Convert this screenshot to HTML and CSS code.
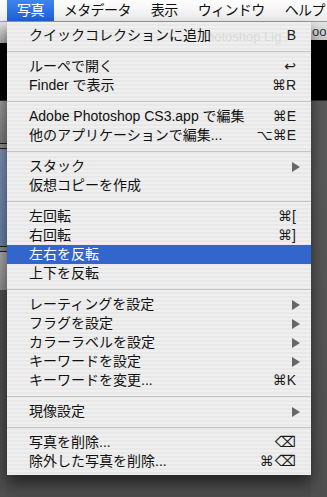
FILE: index.html
```html
<!DOCTYPE html>
<html lang="ja">
<head>
    <meta charset="UTF-8">
    <title>写真メニュー</title>
    <link rel="stylesheet" href="styles.css">
</head>
<body>
<div class="menubar">
    <span class="mb-item active">写真</span>
    <span class="mb-item">メタデータ</span>
    <span class="mb-item">表示</span>
    <span class="mb-item">ウィンドウ</span>
    <span class="mb-item">ヘルプ</span>
</div>

<div class="desk">
    <div class="strip left">
        <div class="b-title"></div>
        <div class="b-black l"></div>
        <div class="b-gray"></div>
        <div class="b-rule"></div>
        <div class="b-blue"></div>
        <div class="b-rule"></div>
        <div class="b-light"></div>
    </div>
    <div class="strip mid"></div>
    <div class="strip right">
        <div class="b-title"><span class="wintitle">oo</span></div>
        <div class="b-black"></div>
    </div>

    <div class="menu">
        <span class="ghost">hotoshop Lig</span>
        <div class="row"><span class="label">クイックコレクションに追加</span><span class="key">B</span></div>
        <div class="sep"></div>
        <div class="row"><span class="label">ルーペで開く</span><span class="key">↩</span></div>
        <div class="row"><span class="label">Finder で表示</span><span class="key">⌘R</span></div>
        <div class="sep"></div>
        <div class="row"><span class="label">Adobe Photoshop CS3.app で編集</span><span class="key">⌘E</span></div>
        <div class="row"><span class="label">他のアプリケーションで編集...</span><span class="key">⌥⌘E</span></div>
        <div class="sep"></div>
        <div class="row"><span class="label">スタック</span><span class="arrow"></span></div>
        <div class="row"><span class="label">仮想コピーを作成</span></div>
        <div class="sep"></div>
        <div class="row"><span class="label">左回転</span><span class="key">⌘[</span></div>
        <div class="row"><span class="label">右回転</span><span class="key">⌘]</span></div>
        <div class="row selected"><span class="label">左右を反転</span></div>
        <div class="row"><span class="label">上下を反転</span></div>
        <div class="sep"></div>
        <div class="row"><span class="label">レーティングを設定</span><span class="arrow"></span></div>
        <div class="row"><span class="label">フラグを設定</span><span class="arrow"></span></div>
        <div class="row"><span class="label">カラーラベルを設定</span><span class="arrow"></span></div>
        <div class="row"><span class="label">キーワードを設定</span><span class="arrow"></span></div>
        <div class="row"><span class="label">キーワードを変更...</span><span class="key">⌘K</span></div>
        <div class="sep"></div>
        <div class="row"><span class="label">現像設定</span><span class="arrow"></span></div>
        <div class="sep"></div>
        <div class="row"><span class="label">写真を削除...</span><span class="key"><span class="del">⌫</span></span></div>
        <div class="row"><span class="label">除外した写真を削除...</span><span class="key">⌘<span class="del">⌫</span></span></div>
    </div>
</div>
</body>
</html>
```

FILE: styles.css
```css
body { margin: 0; width: 327px; height: 497px; overflow: hidden; background: #4e4e4e; font-family: "Liberation Sans", "Noto Sans CJK JP", sans-serif; font-size: 14px; color: #111; }

.menubar { height: 21px; border-bottom: 1px solid #9a9a9a; background: linear-gradient(#fefefe, #ececec); display: flex; padding-left: 7px; white-space: nowrap; overflow: hidden; }
.mb-item { padding: 0 10px; line-height: 21px; letter-spacing: -0.6px; }
.mb-item.active { background: linear-gradient(#3d86f0, #1f5fd8); color: #fff; }

.desk { position: relative; display: flex; height: 475px; }
.strip { display: flex; flex-direction: column; }
.strip.left { width: 7px; }
.strip.mid { flex: 1; background: linear-gradient(#5c5c5c, #4c4c4c); }
.strip.right { width: 16px; background: linear-gradient(#5d5d5d, #4f4f4f); }

.b-title { height: 18px; background: linear-gradient(#e4e4e4, #c9c9c9); overflow: hidden; }
.left .b-title { height: 21px; background: linear-gradient(#e2e2e2, #a9a9a9); }
.b-black { height: 60px; background: #000; border-bottom: 1px solid #2a2a2a; }
.b-black.l { height: 57px; }
.b-gray { height: 42px; background: linear-gradient(#9a9a9a, #7b7b7b); }
.b-rule { height: 4px; border-top: 1px solid #1c1c1c; border-bottom: 1px solid #1c1c1c; background: #8d8d8d; }
.b-blue { height: 97px; background: linear-gradient(#7b8fb2, #6a7fa3); }
.b-light { height: 38px; background: linear-gradient(#a8a8a8, #8e8e8e); }
.wintitle { display: block; font-size: 13px; line-height: 20px; color: #333; margin-left: 1px; }

.menu { position: absolute; top: 0; left: 7px; width: 304px; padding: 4px 0; background: repeating-linear-gradient(#efefef 0 2px, #e8e8e8 2px 4px); box-shadow: 0 8px 14px rgba(0, 0, 0, 0.55); }
.ghost { position: absolute; top: 5px; left: 200px; line-height: 19px; font-size: 13px; color: #dadada; }
.row { position: relative; display: flex; align-items: center; height: 19px; line-height: 19px; padding: 0 15px 0 22px; white-space: nowrap; }
.row .label { flex: 1; }
.row .key { font-family: "Liberation Sans", "DejaVu Sans", sans-serif; font-size: 14px; color: #1a1a1a; }
.row .key .del { font-family: "DejaVu Sans", sans-serif; font-size: 15px; margin-left: 1px; }
.row.selected { background: #3366cc; color: #fff; }
.arrow { width: 0; height: 0; margin-right: -4px; border-left: 8px solid #666; border-top: 5px solid transparent; border-bottom: 5px solid transparent; }
.sep { height: 12px; display: flex; align-items: center; }
.sep::before { content: ""; flex: 1; height: 1px; background: #c4c4c4; }
```
